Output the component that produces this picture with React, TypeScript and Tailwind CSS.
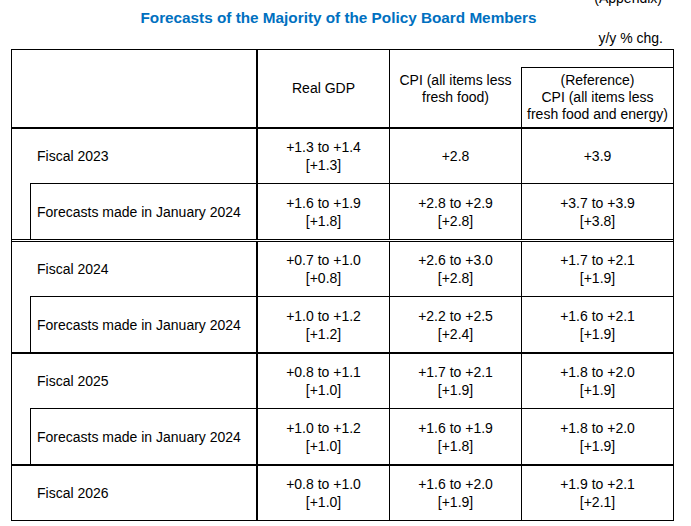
import React from "react";

type Row = { label: string; gdp: string[]; cpi: string[]; core: string[] };

const groups: { fiscal: Row; forecast?: Row; sep: string }[] = [
  {
    sep: "",
    fiscal: { label: "Fiscal 2023", gdp: ["+1.3 to +1.4", "[+1.3]"], cpi: ["+2.8"], core: ["+3.9"] },
    forecast: { label: "Forecasts made in January 2024", gdp: ["+1.6 to +1.9", "[+1.8]"], cpi: ["+2.8 to +2.9", "[+2.8]"], core: ["+3.7 to +3.9", "[+3.8]"] },
  },
  {
    sep: "double",
    fiscal: { label: "Fiscal 2024", gdp: ["+0.7 to +1.0", "[+0.8]"], cpi: ["+2.6 to +3.0", "[+2.8]"], core: ["+1.7 to +2.1", "[+1.9]"] },
    forecast: { label: "Forecasts made in January 2024", gdp: ["+1.0 to +1.2", "[+1.2]"], cpi: ["+2.2 to +2.5", "[+2.4]"], core: ["+1.6 to +2.1", "[+1.9]"] },
  },
  {
    sep: "thick",
    fiscal: { label: "Fiscal 2025", gdp: ["+0.8 to +1.1", "[+1.0]"], cpi: ["+1.7 to +2.1", "[+1.9]"], core: ["+1.8 to +2.0", "[+1.9]"] },
    forecast: { label: "Forecasts made in January 2024", gdp: ["+1.0 to +1.2", "[+1.0]"], cpi: ["+1.6 to +1.9", "[+1.8]"], core: ["+1.8 to +2.0", "[+1.9]"] },
  },
  {
    sep: "thick",
    fiscal: { label: "Fiscal 2026", gdp: ["+0.8 to +1.0", "[+1.0]"], cpi: ["+1.6 to +2.0", "[+1.9]"], core: ["+1.9 to +2.1", "[+2.1]"] },
  },
];

function Lines({ lines }: { lines: string[] }) {
  return (
    <>
      {lines.map((l, i) => (
        <div key={i}>{l}</div>
      ))}
    </>
  );
}

function DataCells({ row, top }: { row: Row; top?: boolean }) {
  const t = top ? "border-t border-black" : "";
  return (
    <>
      <div className={`w-[133px] border-l-2 border-black flex flex-col items-center justify-center ${t}`}>
        <Lines lines={row.gdp} />
      </div>
      <div className={`w-[132px] border-l border-black flex flex-col items-center justify-center ${t}`}>
        <Lines lines={row.cpi} />
      </div>
      <div className={`w-[152px] border-l border-black flex flex-col items-center justify-center ${t}`}>
        <Lines lines={row.core} />
      </div>
    </>
  );
}

export default function App() {
  return (
    <div
      className="w-[691px] h-[526px] overflow-hidden bg-white text-black text-[14px] leading-[18px]"
      style={{ fontFamily: '"Liberation Sans", Arial, sans-serif' }}
    >
      <div className="-mt-[10px] h-[16px] leading-[16px] text-right pr-[29px]">(Appendix)</div>
      <div className="h-[24px] leading-[24px] text-center pr-[14px] font-bold text-[15.3px] text-[#0070c0]">
        Forecasts of the Majority of the Policy Board Members
      </div>
      <div className="h-[16px] leading-[16px] text-right pr-[28px]">y/y % chg.</div>

      <div className="mt-[3px] ml-[11px] w-[663px] border border-black">
        {/* header */}
        <div className="flex h-[79px] border-b-2 border-black leading-[17px]">
          <div className="w-[244px]" />
          <div className="w-[133px] border-l-2 border-black flex items-center justify-center">Real GDP</div>
          <div className="w-[132px] border-l border-black flex flex-col items-center justify-center text-center">
            <div>CPI (all items less</div>
            <div>fresh food)</div>
          </div>
          <div className="w-[152px] flex flex-col">
            <div className="h-[17px]" />
            <div className="flex-1 border-l border-t border-black flex flex-col items-center justify-center text-center">
              <div>(Reference)</div>
              <div>CPI (all items less</div>
              <div>fresh food and energy)</div>
            </div>
          </div>
        </div>

        {groups.map((g, gi) => (
          <div
            key={gi}
            className={
              g.sep === "double"
                ? "border-t-[3px] border-double border-black"
                : g.sep === "thick"
                ? "border-t-2 border-black"
                : ""
            }
          >
            <div className="flex h-[54px]">
              <div className="w-[244px] pl-[25px] flex items-center">{g.fiscal.label}</div>
              <DataCells row={g.fiscal} />
            </div>
            {g.forecast && (
              <div className="flex h-[56px]">
                <div className="w-[18px]" />
                <div className="w-[226px] border-l border-t border-black pl-[6px] flex items-center">
                  {g.forecast.label}
                </div>
                <DataCells row={g.forecast} top />
              </div>
            )}
          </div>
        ))}
      </div>
    </div>
  );
}
